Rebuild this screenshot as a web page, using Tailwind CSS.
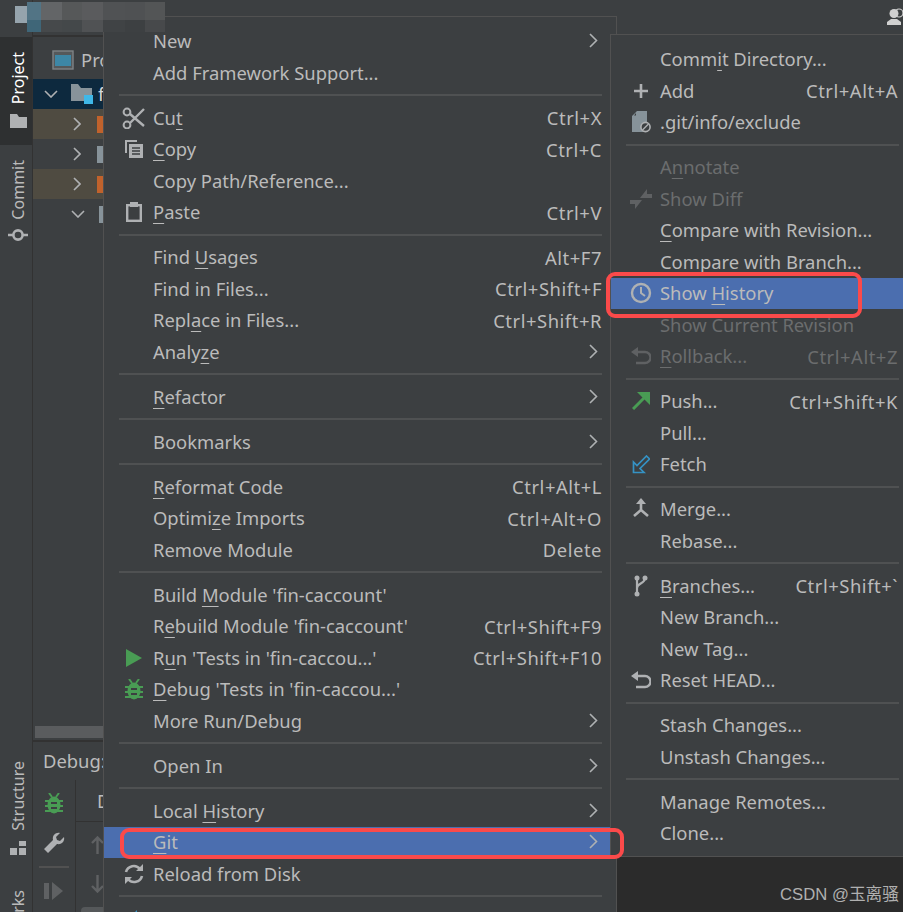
<!DOCTYPE html>
<html lang="en">
<head>
<meta charset="UTF-8">
<title>Git menu</title>
<script src="https://cdn.jsdelivr.net/npm/@tailwindcss/browser@4"></script>
</head>
<body class="bg-[#3c3f41] font-['Noto_Sans',sans-serif] text-[#bbbbbb] overflow-hidden">
<div class="relative w-[903px] h-[912px] overflow-hidden flex">
  <!-- left tool strip -->
  <div class="w-[33px] h-full shrink-0 border-r border-[#323232] flex flex-col text-[16px] leading-none">
    <div class="h-[37px] shrink-0"></div>
    <div class="h-[108px] shrink-0 bg-[#2e3031] flex flex-col items-center pl-[4px] pt-[15px] text-white">
      <span class="[writing-mode:vertical-rl] rotate-180">Project</span>
      <svg class="mt-[10px]" width="17" height="14" viewBox="0 0 17 14"><path d="M0 0h7l2 3h8v11H0z" fill="#afb1b3"/></svg>
    </div>
    <div class="flex flex-col items-center pl-[3px] pt-[15px]">
      <span class="[writing-mode:vertical-rl] rotate-180">Commit</span>
      <svg class="mt-[8px]" width="20" height="14" viewBox="0 0 20 14"><path d="M0 7h5M15 7h5" stroke="#afb1b3" stroke-width="2.4"/><circle cx="10" cy="7" r="4.6" fill="none" stroke="#afb1b3" stroke-width="2.6"/></svg>
    </div>
    <div class="flex-1"></div>
    <div class="flex flex-col items-center pl-[3px] h-[151px] shrink-0">
      <span class="[writing-mode:vertical-rl] rotate-180 shrink-0">Structure</span>
      <svg class="mt-[10px] shrink-0" width="16" height="14" viewBox="0 0 16 14"><path d="M0 7h7v7H0zM9 7h7v7H9zM9 0h7v5H9z" fill="#afb1b3"/></svg>
      <span class="[writing-mode:vertical-rl] rotate-180 mt-[35px] shrink-0">Bookmarks</span>
    </div>
  </div>

  <div class="flex-1 flex flex-col">
    <!-- title bar -->
    <div class="h-[37px] border-b-2 border-[#323232] shrink-0"></div>
    <!-- project tree -->
    <div class="h-[42px] flex items-center pl-[19px] pt-[4px] gap-[7px] shrink-0 text-[18.4px]">
      <svg width="22" height="20" viewBox="0 0 22 20"><rect x="1" y="1" width="20" height="18" fill="#55595b" stroke="#7f8486" stroke-width="1.4"/><rect x="3" y="5" width="16" height="11" fill="#3d87a6"/></svg>
      <span>Project</span>
    </div>
    <div class="h-[30px] bg-[#0d293e] flex items-center shrink-0 pl-[11px] gap-[13px] text-[18.4px] text-[#d8d8d8]">
      <svg width="14" height="8" viewBox="0 0 14 8"><path d="M1 1l6 6 6-6" fill="none" stroke="#afb1b3" stroke-width="1.6"/></svg>
      <svg width="22" height="22" viewBox="0 0 22 22"><path d="M0 1h7l3 4h11v13H0z" fill="#87939a"/><rect x="13" y="12" width="9" height="9" fill="#3fb8e8"/></svg>
      <span class="-ml-[8px]">fin</span>
    </div>
    <div class="h-[30px] bg-[#4f4b41] flex items-center shrink-0 pl-[40px] gap-[16px]">
      <svg width="8" height="14" viewBox="0 0 8 14"><path d="M1 1l6 6-6 6" fill="none" stroke="#afb1b3" stroke-width="1.6"/></svg>
      <div class="w-[8px] h-[17px] bg-[#c0622c]"></div>
    </div>
    <div class="h-[30px] flex items-center shrink-0 pl-[40px] gap-[16px]">
      <svg width="8" height="14" viewBox="0 0 8 14"><path d="M1 1l6 6-6 6" fill="none" stroke="#afb1b3" stroke-width="1.6"/></svg>
      <div class="w-[8px] h-[17px] bg-[#87939a]"></div>
    </div>
    <div class="h-[30px] bg-[#4f4b41] flex items-center shrink-0 pl-[40px] gap-[16px]">
      <svg width="8" height="14" viewBox="0 0 8 14"><path d="M1 1l6 6-6 6" fill="none" stroke="#afb1b3" stroke-width="1.6"/></svg>
      <div class="w-[8px] h-[17px] bg-[#c0622c]"></div>
    </div>
    <div class="h-[30px] flex items-center shrink-0 pl-[38px] gap-[14px]">
      <svg width="14" height="8" viewBox="0 0 14 8"><path d="M1 1l6 6 6-6" fill="none" stroke="#afb1b3" stroke-width="1.6"/></svg>
      <div class="w-[8px] h-[17px] bg-[#87939a]"></div>
    </div>
    <div class="flex-1"></div>
    <!-- horizontal scrollbar -->
    <div class="h-[12px] ml-[2px] bg-[#5a5c5e] shrink-0"></div>
    <!-- debug panel -->
    <div class="h-[172px] mt-[2px] border-t-2 border-[#323232] shrink-0 flex flex-col">
      <div class="h-[38px] shrink-0 pl-[10px] flex items-center text-[18.4px]">Debug:</div>
      <div class="flex-1 flex">
        <div class="w-[43px] shrink-0 border-r border-[#323232] flex flex-col items-center pt-[13px]">
          <svg width="18" height="21" viewBox="0 0 18 21"><path d="M4 0l3 4M14 0l-3 4M0 8h18M0 13h18M0 18h18" fill="none" stroke="#499c54" stroke-width="2"/><ellipse cx="9" cy="12" rx="6.5" ry="8.5" fill="#499c54"/><path d="M6 10h6M6 15h6" stroke="#3c3f41" stroke-width="1.8"/></svg>
          <svg class="mt-[18px]" width="22" height="22" viewBox="0 0 22 22"><path d="M21 5l-4 4-3-1-1-3 4-4c-4-1-8 2-7 7L1 17l4 4 9-9c5 1 8-3 7-7z" fill="#afb1b3"/></svg>
          <div class="mt-[12px] w-[30px] h-[2px] bg-[#515151]"></div>
          <svg class="mt-[14px]" width="20" height="18" viewBox="0 0 20 18"><path d="M0 1h5v16H0zM8 0l11 9-11 9z" fill="#5f6163"/></svg>
        </div>
        <div class="flex-1 flex flex-col">
          <div class="h-[42px] shrink-0 border-b border-[#323232] pl-[21px] flex items-center text-[18.4px]">D</div>
          <div class="pl-[15px] pt-[14px] flex flex-col gap-[21px]">
            <svg width="13" height="18" viewBox="0 0 13 18"><path d="M6.5 18V2M1 7l5.5-5.5L12 7" fill="none" stroke="#5f6163" stroke-width="2.4"/></svg>
            <svg width="13" height="18" viewBox="0 0 13 18"><path d="M6.5 0v16M1 11l5.5 5.5L12 11" fill="none" stroke="#5f6163" stroke-width="2.4"/></svg>
          </div>
          <div class="mt-[14px] ml-[5px] h-[8px] bg-[#55585a] rounded-t-[4px]"></div>
        </div>
      </div>
    </div>
  </div>

  <!-- user icon -->
  <svg class="absolute left-[887px] top-[8px]" width="16" height="17" viewBox="0 0 16 17"><circle cx="12" cy="5" r="4" fill="none" stroke="#d0d0d0" stroke-width="1.2"/><circle cx="7" cy="5.5" r="4.5" fill="#d0d0d0"/><path d="M0 17v-3l4-3h6l4 3v3z" fill="#d0d0d0"/></svg>

  <!-- bottom right dark area -->
  <div class="absolute left-[616px] top-[857px] right-0 bottom-0 bg-[#2b2b2b] pt-[29px] pr-[4px] text-right text-[16.7px] leading-[18px] text-[#b0b0b0] font-['Liberation_Sans','Noto_Sans_CJK_SC',sans-serif]">CSDN @玉离骚</div>

  <!-- main context menu -->
  <div id="menu" class="absolute left-[103px] top-[16px] w-[514px] h-[920px] bg-[#3c3f41] border border-[#515151] pt-[8.5px] text-[18.4px]"></div>
  <!-- git submenu -->
  <div id="submenu" class="absolute left-[610px] top-[34px] w-[310px] h-[823px] bg-[#3c3f41] border border-[#515151] pt-[8.5px] text-[18.4px]"></div>

  <!-- blurred title -->
  <div class="absolute left-[15px] top-[6px] w-[12px] h-[17px] bg-[#96a4ad]"></div>
  <div class="absolute left-[27px] top-[2px] w-[138px] h-[30px] grid grid-cols-[14px_21px_20px_21px_22px_20px_20px] grid-rows-[18px_12px]">
    <div class="bg-[#527485]"></div><div class="bg-[#636567]"></div><div class="bg-[#565859]"></div><div class="bg-[#5a5b5d]"></div><div class="bg-[#505254]"></div><div class="bg-[#4f5153]"></div><div class="bg-[#535556]"></div>
    <div class="bg-[#3f6678]"></div><div class="bg-[#46494b]"></div><div class="bg-[#44484a]"></div><div class="bg-[#505254]"></div><div class="bg-[#404345]"></div><div class="bg-[#3d4042]"></div><div class="bg-[#47494b]"></div>
  </div>

  <!-- red annotations -->
  <div class="absolute left-[120px] top-[828px] w-[504px] h-[31px] border-[4px] border-[#fb4a4a] rounded-[9px]"></div>
  <div class="absolute left-[606px] top-[272px] w-[256px] h-[46px] border-[4px] border-[#fb4a4a] rounded-[9px]"></div>
</div>

<script>
  const icons = {
    cut: '<svg width="24" height="22" viewBox="0 0 24 22"><circle cx="5" cy="18" r="3.4" fill="none" stroke="#afb1b3" stroke-width="2"/><circle cx="5" cy="5" r="3.4" fill="none" stroke="#afb1b3" stroke-width="2"/><path d="M8 7l14 12M8 16L22 2" stroke="#afb1b3" stroke-width="2.4"/></svg>',
    copy: '<svg width="20" height="20" viewBox="0 0 20 20"><path d="M1 1h12v2H3v11H1z" fill="#afb1b3"/><path d="M5 5h14v14H5z" fill="#afb1b3"/><path d="M8 9h8M8 12h8M8 15h8" stroke="#3c3f41" stroke-width="1.4"/></svg>',
    paste: '<svg width="16" height="20" viewBox="0 0 16 20"><rect x="1.2" y="3.2" width="13.6" height="15.6" fill="none" stroke="#afb1b3" stroke-width="2.4"/><rect x="4" y="0" width="8" height="5" fill="#afb1b3"/></svg>',
    run: '<svg width="16" height="18" viewBox="0 0 16 18"><path d="M0 0l16 9-16 9z" fill="#499c54"/></svg>',
    debug: '<svg width="18" height="21" viewBox="0 0 18 21"><path d="M4 0l3 4M14 0l-3 4M0 8h18M0 13h18M0 18h18" fill="none" stroke="#499c54" stroke-width="2"/><ellipse cx="9" cy="12" rx="6.5" ry="8.5" fill="#499c54"/><path d="M6 10h6M6 15h6" stroke="#3c3f41" stroke-width="1.8"/></svg>',
    reload: '<svg width="20" height="20" viewBox="0 0 20 20"><path d="M2 8a8 8 0 0 1 14-3M18 12a8 8 0 0 1-14 3" fill="none" stroke="#afb1b3" stroke-width="2.6"/><path d="M12 7h7V0zM8 13H1v7z" fill="#afb1b3"/></svg>',
    plus: '<svg width="16" height="16" viewBox="0 0 16 16"><path d="M8 1v14M1 8h14" stroke="#afb1b3" stroke-width="2.6"/></svg>',
    exclude: '<svg width="19" height="22" viewBox="0 0 19 22"><path d="M5 0H15V21H0V5zM4 2L2 4.5H4z" fill="#87939a"/><circle cx="13.5" cy="16" r="4.6" fill="#3c3f41" stroke="#afb1b3" stroke-width="1.6"/><path d="M10.5 19l6-6" stroke="#afb1b3" stroke-width="1.4"/></svg>',
    diff: '<svg width="22" height="22" viewBox="0 0 22 22"><path d="M10 10L17 1V6H22V10zM12 12L5 21V16H0V12z" fill="#5f6163"/></svg>',
    clock: '<svg width="22" height="22" viewBox="0 0 22 22"><circle cx="11" cy="11" r="9" fill="none" stroke="#afb1b3" stroke-width="2.4"/><path d="M11 5v6l4 3" fill="none" stroke="#afb1b3" stroke-width="2"/></svg>',
    undoDim: '<svg width="20" height="18" viewBox="0 0 20 18"><path d="M5 5h9a4.5 4.5 0 0 1 0 11H5" fill="none" stroke="#5f6163" stroke-width="2.4"/><path d="M7 0v10L0 5z" fill="#5f6163"/></svg>',
    undo: '<svg width="20" height="18" viewBox="0 0 20 18"><path d="M5 5h9a4.5 4.5 0 0 1 0 11H5" fill="none" stroke="#afb1b3" stroke-width="2.4"/><path d="M7 0v10L0 5z" fill="#afb1b3"/></svg>',
    push: '<svg width="18" height="18" viewBox="0 0 18 18"><path d="M1 17L15 3" stroke="#499c54" stroke-width="3"/><path d="M5 0h13v13z" fill="#499c54"/></svg>',
    fetch: '<svg width="18" height="19" viewBox="0 0 18 19"><path d="M14.5 1L17.5 4L8 13.5L12 17.5H1.5V7L5 10.5Z" fill="none" stroke="#3592c4" stroke-width="1.7"/></svg>',
    merge: '<svg width="16" height="22" viewBox="0 0 16 22"><path d="M8 3v9L1 18M8 12l7 6" fill="none" stroke="#afb1b3" stroke-width="2.6"/><path d="M8 0l5 6H3z" fill="#afb1b3"/></svg>',
    branch: '<svg width="14" height="22" viewBox="0 0 14 22"><circle cx="3" cy="3" r="2.5" fill="#afb1b3"/><circle cx="3" cy="19" r="2.5" fill="#afb1b3"/><circle cx="11" cy="3" r="2.5" fill="#afb1b3"/><path d="M3 3v16M11 3c0 6-8 5-8 10" fill="none" stroke="#afb1b3" stroke-width="2.2"/></svg>',
    compare: '<svg width="18" height="18" viewBox="0 0 18 18"><path d="M12 0v9H3z" fill="#3592c4"/></svg>'
  };
  const arrow = '<svg class="absolute right-[18px] top-[7.5px]" width="9" height="15" viewBox="0 0 9 15"><path d="M1 1l6.5 6.5L1 14" fill="none" stroke="#afb1b3" stroke-width="1.6"/></svg>';
  const u = s => '<u class="underline-offset-[4px] decoration-1">' + s + '</u>';

  // null = separator; [label, shortcut, icon, flags]
  const mainItems = [
    ['New', '', '', 'sub'], ['Add Framework Support...'], null,
    ['Cu' + u('t'), 'Ctrl+X', 'cut'], [u('C') + 'opy', 'Ctrl+C', 'copy'], ['Copy Path/Reference...'], [u('P') + 'aste', 'Ctrl+V', 'paste'], null,
    ['Find ' + u('U') + 'sages', 'Alt+F7'], ['Find in Files...', 'Ctrl+Shift+F'], ['Repl' + u('a') + 'ce in Files...', 'Ctrl+Shift+R'], ['Analy' + u('z') + 'e', '', '', 'sub'], null,
    [u('R') + 'efactor', '', '', 'sub'], null,
    ['Bookmarks', '', '', 'sub'], null,
    [u('R') + 'eformat Code', 'Ctrl+Alt+L'], ['Optimi' + u('z') + 'e Imports', 'Ctrl+Alt+O'], ['Remove Module', 'Delete'], null,
    ['Build ' + u('M') + 'odule \'fin-caccount\''], ['R' + u('e') + 'build Module \'fin-caccount\'', 'Ctrl+Shift+F9'], ['R' + u('u') + 'n \'Tests in \'fin-caccou...\'', 'Ctrl+Shift+F10', 'run'], [u('D') + 'ebug \'Tests in \'fin-caccou...\'', '', 'debug'], ['More Run/Debug', '', '', 'sub'], null,
    ['Open In', '', '', 'sub'], null,
    ['Local ' + u('H') + 'istory', '', '', 'sub'], [u('G') + 'it', '', '', 'sub active'], ['Reload from Disk', '', 'reload'], null,
    ['Compare With...', '', 'compare']
  ];
  const subItems = [
    ['Comm' + u('i') + 't Directory...'], ['Add', 'Ctrl+Alt+A', 'plus'], ['.git/info/exclude', '', 'exclude'], null,
    ['A' + u('n') + 'notate', '', '', 'off'], ['Show Diff', '', 'diff', 'off'], [u('C') + 'ompare with Revision...'], ['Compare with Branch...'], ['Show ' + u('H') + 'istory', '', 'clock', 'active'], ['Show Current Revision', '', '', 'off'], [u('R') + 'ollback...', 'Ctrl+Alt+Z', 'undoDim', 'off'], null,
    ['Push...', 'Ctrl+Shift+K', 'push'], ['Pull...'], ['Fetch', '', 'fetch'], null,
    ['Merge...', '', 'merge'], ['Rebase...'], null,
    [u('B') + 'ranches...', 'Ctrl+Shift+`', 'branch'], ['New Branch...'], ['New Tag...'], ['Reset HEAD...', '', 'undo'], null,
    ['Stash Changes...'], ['Unstash Changes...'], null,
    ['Manage Remotes...'], ['Clone...']
  ];

  function renderMenu(el, items, width, shortcutRight) {
    el.innerHTML = items.map(item => {
      if (!item) return '<div class="h-[13.5px] flex items-center pl-[15px]" style="width:' + width + 'px"><div class="h-[2px] w-full bg-[#4f5152]"></div></div>';
      const [label, shortcut, icon, flags = ''] = item;
      const off = flags.includes('off');
      const active = flags.includes('active');
      return '<div class="relative h-[31.5px] flex items-center leading-none whitespace-nowrap ' + (active ? 'bg-[#4b6eaf] ' : '') + (off ? 'text-[#6b6d6e]' : 'text-[#bbbbbb]') + '">' +
        '<span class="w-[49px] shrink-0 flex justify-center pl-[11px]">' + (icon ? icons[icon] : '') + '</span>' +
        '<span>' + label + '</span>' +
        (shortcut ? '<span class="absolute top-[7px] tracking-[0.55px]" style="right:' + shortcutRight + 'px">' + shortcut + '</span>' : '') +
        (flags.includes('sub') ? arrow : '') +
        '</div>';
    }).join('');
  }
  renderMenu(document.getElementById('menu'), mainItems, 498, 14);
  renderMenu(document.getElementById('submenu'), subItems, 288, 21);
</script>
</body>
</html>
